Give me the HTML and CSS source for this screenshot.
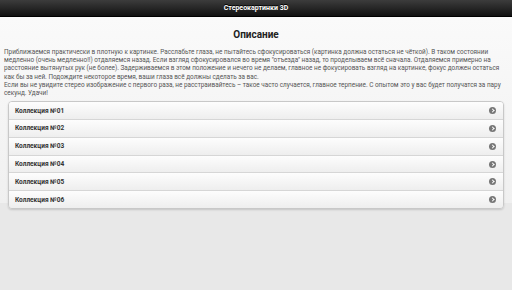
FILE: index.html
```html
<!DOCTYPE html>
<html lang="ru">
<head>
    <meta charset="UTF-8">
    <meta name="viewport" content="width=device-width, initial-scale=1.0">
    <title>Стереокартинки 3D</title>
    <link rel="stylesheet" href="styles.css">
</head>
<body>
    <header class="bar">Стереокартинки 3D</header>
    <main class="content">
        <h2 class="title">Описание</h2>
        <p class="desc">Приближаемся практически в плотную к картинке. Расслабьте глаза, не пытайтесь сфокусироваться (картинка должна остаться не чёткой). В таком состоянии медленно (очень медленно!!) отдаляемся назад. Если взгляд сфокусировался во время "отъезда" назад, то проделываем всё сначала. Отдаляемся примерно на расстояние вытянутых рук (не более). Задерживаемся в этом положение и нечего не делаем, главное не фокусировать взгляд на картинке, фокус должен остаться как бы за ней. Подождите некоторое время, ваши глаза всё должны сделать за вас.<br>Если вы не увидите стерео изображение с первого раза, не расстраивайтесь – такое часто случается, главное терпение. С опытом это у вас будет получатся за пару секунд. Удачи!</p>
        <ul class="list">
            <li><span>Коллекция №01</span><i class="arrow"></i></li>
            <li><span>Коллекция №02</span><i class="arrow"></i></li>
            <li><span>Коллекция №03</span><i class="arrow"></i></li>
            <li><span>Коллекция №04</span><i class="arrow"></i></li>
            <li><span>Коллекция №05</span><i class="arrow"></i></li>
            <li><span>Коллекция №06</span><i class="arrow"></i></li>
        </ul>
    </main>
</body>
</html>
```

FILE: styles.css
```css
body {
    margin: 0;
    font-family: Roboto, "Liberation Sans", sans-serif;
    background: linear-gradient(to bottom, #fafafa 17px, #f0f0f0 203px, #e8e8e8 203px);
    background-color: #e8e8e8;
    min-height: 290px;
}

.bar {
    height: 17px;
    box-sizing: border-box;
    background: linear-gradient(to bottom, #3c3c3c, #111);
    border-bottom: 1px solid #000;
    color: #fff;
    font-size: 7px;
    font-weight: bold;
    line-height: 16px;
    text-align: center;
    text-shadow: 0 -1px 0 #000;
}

.content {
    padding: 0 4px;
}

.title {
    margin: 0;
    padding-top: 12px;
    height: 17px;
    font-size: 10px;
    line-height: 12px;
    text-align: center;
    color: #222;
}

.desc {
    margin: 0;
    padding-top: 2px;
    font-size: 6.4px;
    line-height: 8.2px;
    color: #555;
}

.list {
    list-style: none;
    margin: 4px 4px 0;
    padding: 0;
    border: 1px solid #c8c8c8;
    border-radius: 4px;
    box-shadow: 0 1px 2px rgba(0, 0, 0, 0.15);
    overflow: hidden;
}

.list li {
    display: flex;
    align-items: center;
    justify-content: space-between;
    height: 16.8px;
    padding: 0 7px 0 6px;
    background: linear-gradient(to bottom, #fdfdfd, #eee);
    border-top: 1px solid #d6d6d6;
    font-size: 6.5px;
    font-weight: bold;
    color: #333;
}

.list li:first-child {
    border-top: none;
}

.arrow {
    width: 7px;
    height: 7px;
    border-radius: 50%;
    background: #777;
    position: relative;
}

.arrow::after {
    content: "";
    position: absolute;
    left: 1.5px;
    top: 2px;
    width: 2px;
    height: 2px;
    border-top: 1px solid #fff;
    border-right: 1px solid #fff;
    transform: rotate(45deg);
}
```
